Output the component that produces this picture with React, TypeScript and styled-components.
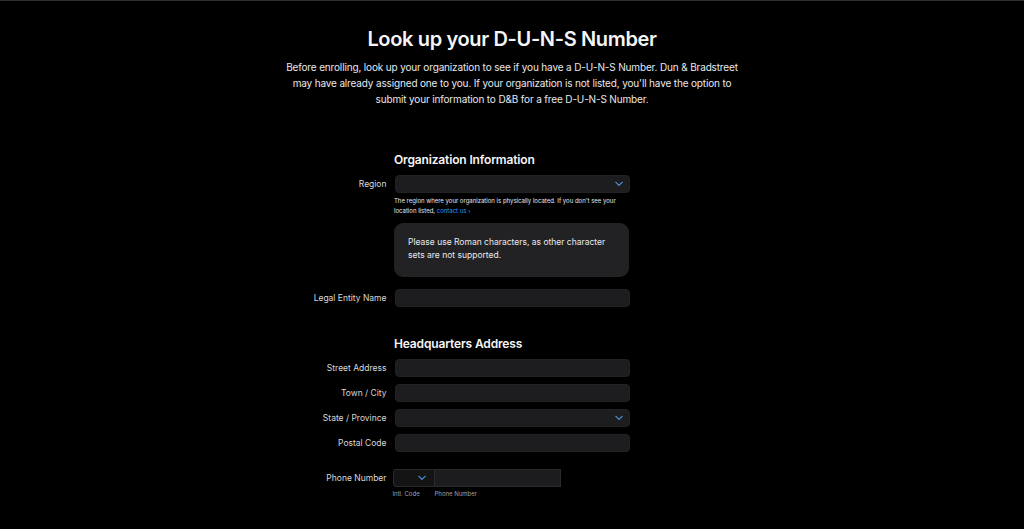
import React from 'react'
import styled, {createGlobalStyle} from 'styled-components'

// global
const GlobalStyle = createGlobalStyle`
  * {
    box-sizing: border-box;
  }

  body {
    margin: 0;
    background-color: #000;
    font-family: Inter, "Noto Sans", sans-serif;
    color: #f5f5f7;
  }
`

// types
type FieldType = {
    label: string
    select?: boolean
}

const Chevron = () => (
    <svg width="8" height="5" viewBox="0 0 8 5" fill="none">
        <path d="M0.7 0.7 L4 4 L7.3 0.7" stroke="#4a8fd6" strokeWidth="1.2" strokeLinecap="round"/>
    </svg>
)

const Field = (props: FieldType) => {
    return (
        <Row>
            <Label>{props.label}</Label>
            <Input>
                {props.select && <ChevronBox><Chevron/></ChevronBox>}
            </Input>
        </Row>
    )
}

export default function App() {
    return (
        <Page>
            <GlobalStyle/>

            <Title>Look up your D-U-N-S Number</Title>
            <Intro>
                Before enrolling, look up your organization to see if you have a D-U-N-S Number. Dun &amp; Bradstreet
                may have already assigned one to you. If your organization is not listed, you'll have the option to
                submit your information to D&amp;B for a free D-U-N-S Number.
            </Intro>

            <Form>
                <SectionTitle $top={44}>Organization Information</SectionTitle>
                <Field label="Region" select/>
                <Aside>
                    <HelpText>
                        The region where your organization is physically located. If you don't see your
                        location listed, <Link href="#">contact us ›</Link>
                    </HelpText>
                    <Note>Please use Roman characters, as other character sets are not supported.</Note>
                </Aside>
                <Spacer $h={12}/>
                <Field label="Legal Entity Name"/>

                <SectionTitle $top={28}>Headquarters Address</SectionTitle>
                <Rows>
                    <Field label="Street Address"/>
                    <Field label="Town / City"/>
                    <Field label="State / Province" select/>
                    <Field label="Postal Code"/>
                </Rows>

                <Spacer $h={17}/>
                <Row>
                    <Label>Phone Number</Label>
                    <PhoneGroup>
                        <PhonePart>
                            <CodeInput><ChevronBox><Chevron/></ChevronBox></CodeInput>
                            <SubLabel>Intl. Code</SubLabel>
                        </PhonePart>
                        <PhonePart>
                            <NumberInput/>
                            <SubLabel>Phone Number</SubLabel>
                        </PhonePart>
                    </PhoneGroup>
                </Row>
            </Form>
        </Page>
    )
}

const Page = styled.div`
  min-height: 529px;
  border-top: 1px solid #2e2e30;
  padding-top: 25px;
  display: flex;
  flex-direction: column;
  align-items: center;
`

const Title = styled.h1`
  margin: 0;
  font-size: 20px;
  line-height: 26px;
  font-weight: 600;
  letter-spacing: -0.35px;
  color: #f5f5f7;
`

const Intro = styled.p`
  margin: 7px 0 0;
  width: 472px;
  text-align: center;
  font-size: 10px;
  line-height: 16px;
  letter-spacing: -0.15px;
  color: #e8e8ed;
`

const Form = styled.div`
  width: 100%;
  display: flex;
  flex-direction: column;
`

const SectionTitle = styled.h2<{ $top: number }>`
  margin: ${props => props.$top}px 0 6px 394px;
  font-size: 12px;
  line-height: 18px;
  font-weight: 600;
  letter-spacing: -0.15px;
  color: #f5f5f7;
`

const Row = styled.div`
  display: grid;
  grid-template-columns: 1fr 235px 1fr;
  column-gap: 8px;
  align-items: start;
`

const Rows = styled.div`
  display: flex;
  flex-direction: column;
  gap: 7px;
`

const Label = styled.div`
  text-align: right;
  font-size: 8.5px;
  line-height: 18px;
  color: #d8d8dc;
`

const Input = styled.div`
  grid-column: 2;
  position: relative;
  height: 18px;
  border-radius: 4px;
  background-color: #1d1d1f;
  border: 1px solid #222224;
`

const ChevronBox = styled.span`
  position: absolute;
  right: 6px;
  top: 50%;
  transform: translateY(-50%);
  display: flex;
`

const Aside = styled.div`
  margin-left: 394px;
  width: 235px;
  display: flex;
  flex-direction: column;
`

const HelpText = styled.p`
  margin: 3px 0 0;
  font-size: 6px;
  line-height: 10px;
  color: #e8e8ed;
`

const Link = styled.a`
  color: #2997ff;
  text-decoration: none;
`

const Note = styled.div`
  margin-top: 7px;
  padding: 13px 12px 15px 14px;
  border-radius: 9px;
  background-color: #222224;
  font-size: 8.5px;
  line-height: 13px;
  color: #e8e8ed;
`

const Spacer = styled.div<{ $h: number }>`
  height: ${props => props.$h}px;
`

const PhoneGroup = styled.div`
  grid-column: 2;
  display: flex;
  margin-left: -2px;
`

const PhonePart = styled.div`
  display: flex;
  flex-direction: column;
  gap: 3px;
`

const CodeInput = styled.div`
  position: relative;
  width: 42px;
  height: 18px;
  border: 1px solid #2a2a2c;
  border-radius: 3px 0 0 3px;
  background-color: #141415;

  ${ChevronBox} {
    right: 8px;
  }
`

const NumberInput = styled.div`
  width: 126px;
  height: 18px;
  border: 1px solid #2a2a2c;
  border-left: none;
  background-color: #1c1c1e;
`

const SubLabel = styled.span`
  font-size: 6px;
  line-height: 8px;
  color: #a1a1a6;
`
